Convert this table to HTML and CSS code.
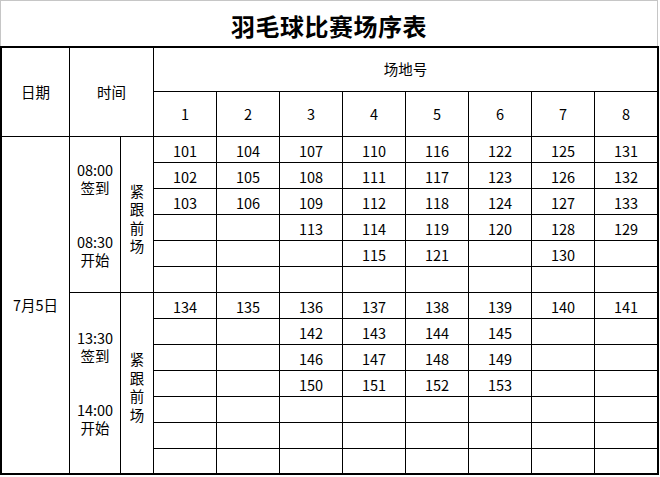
FILE: index.html
```html
<!DOCTYPE html>
<html lang="zh">
<head>
<meta charset="utf-8">
<title>羽毛球比赛场序表</title>
<link rel="stylesheet" href="styles.css">
</head>
<body>
<div class="page">
  <div class="title">羽毛球比赛场序表</div>
  <div class="sheet">
    <div class="cell h-date">日期</div>
    <div class="cell h-time">时间</div>
    <div class="cell h-court">场地号</div>
    <div class="cell">1</div>
    <div class="cell">2</div>
    <div class="cell">3</div>
    <div class="cell">4</div>
    <div class="cell">5</div>
    <div class="cell">6</div>
    <div class="cell">7</div>
    <div class="cell">8</div>

    <div class="cell date">7月5日</div>

    <div class="cell time b1"><span>08:00</span><span>签到</span><span>&nbsp;</span><span>&nbsp;</span><span>08:30</span><span>开始</span></div>
    <div class="cell follow b1"><span>紧</span><span>跟</span><span>前</span><span>场</span></div>

    <div class="cell d">101</div><div class="cell d">104</div><div class="cell d">107</div><div class="cell d">110</div><div class="cell d">116</div><div class="cell d">122</div><div class="cell d">125</div><div class="cell d">131</div>
    <div class="cell d">102</div><div class="cell d">105</div><div class="cell d">108</div><div class="cell d">111</div><div class="cell d">117</div><div class="cell d">123</div><div class="cell d">126</div><div class="cell d">132</div>
    <div class="cell d">103</div><div class="cell d">106</div><div class="cell d">109</div><div class="cell d">112</div><div class="cell d">118</div><div class="cell d">124</div><div class="cell d">127</div><div class="cell d">133</div>
    <div class="cell d"></div><div class="cell d"></div><div class="cell d">113</div><div class="cell d">114</div><div class="cell d">119</div><div class="cell d">120</div><div class="cell d">128</div><div class="cell d">129</div>
    <div class="cell d"></div><div class="cell d"></div><div class="cell d"></div><div class="cell d">115</div><div class="cell d">121</div><div class="cell d"></div><div class="cell d">130</div><div class="cell d"></div>
    <div class="cell d"></div><div class="cell d"></div><div class="cell d"></div><div class="cell d"></div><div class="cell d"></div><div class="cell d"></div><div class="cell d"></div><div class="cell d"></div>

    <div class="cell time b2"><span>13:30</span><span>签到</span><span>&nbsp;</span><span>&nbsp;</span><span>14:00</span><span>开始</span></div>
    <div class="cell follow b2"><span>紧</span><span>跟</span><span>前</span><span>场</span></div>

    <div class="cell d">134</div><div class="cell d">135</div><div class="cell d">136</div><div class="cell d">137</div><div class="cell d">138</div><div class="cell d">139</div><div class="cell d">140</div><div class="cell d">141</div>
    <div class="cell d"></div><div class="cell d"></div><div class="cell d">142</div><div class="cell d">143</div><div class="cell d">144</div><div class="cell d">145</div><div class="cell d"></div><div class="cell d"></div>
    <div class="cell d"></div><div class="cell d"></div><div class="cell d">146</div><div class="cell d">147</div><div class="cell d">148</div><div class="cell d">149</div><div class="cell d"></div><div class="cell d"></div>
    <div class="cell d"></div><div class="cell d"></div><div class="cell d">150</div><div class="cell d">151</div><div class="cell d">152</div><div class="cell d">153</div><div class="cell d"></div><div class="cell d"></div>
    <div class="cell d"></div><div class="cell d"></div><div class="cell d"></div><div class="cell d"></div><div class="cell d"></div><div class="cell d"></div><div class="cell d"></div><div class="cell d"></div>
    <div class="cell d"></div><div class="cell d"></div><div class="cell d"></div><div class="cell d"></div><div class="cell d"></div><div class="cell d"></div><div class="cell d"></div><div class="cell d"></div>
    <div class="cell d"></div><div class="cell d"></div><div class="cell d"></div><div class="cell d"></div><div class="cell d"></div><div class="cell d"></div><div class="cell d"></div><div class="cell d"></div>
  </div>
</div>
</body>
</html>
```
FILE: styles.css
```css
html, body {
  margin: 0;
  padding: 0;
  background: #ffffff;
}

body {
  font-family: "Noto Sans CJK SC", "Noto Sans", sans-serif;
  font-size: 14.5px;
  color: #000000;
}

.page {
  width: 660px;
}

.title {
  box-sizing: border-box;
  width: 658px;
  height: 46px;
  border: 1px solid #c6c6c6;
  border-bottom: none;
  display: flex;
  align-items: center;
  justify-content: center;
  padding-top: 4px;
  font-size: 24px;
  font-weight: 700;
  letter-spacing: 0.5px;
  line-height: 1;
}

.sheet {
  width: 655px;
  display: grid;
  grid-template-columns: 67px 50px 32px repeat(8, 62px);
  grid-template-rows: 43px 44px repeat(12, 25px) 24px;
  gap: 1px;
  background: #000000;
  border: 2px solid #000000;
}

.cell {
  background: #ffffff;
  display: flex;
  align-items: center;
  justify-content: center;
  line-height: 1;
  white-space: nowrap;
}

.h-date {
  grid-column: 1;
  grid-row: 1 / span 2;
}

.h-time {
  grid-column: 2 / span 2;
  grid-row: 1 / span 2;
}

.h-court {
  grid-column: 4 / span 8;
  grid-row: 1;
}

.date {
  grid-column: 1;
  grid-row: 3 / span 13;
}

.time {
  grid-column: 2;
  flex-direction: column;
  line-height: 18px;
}

.follow {
  grid-column: 3;
  flex-direction: column;
  line-height: 18.5px;
  padding-top: 8px;
}

.b1 {
  grid-row: 3 / span 6;
}

.b2 {
  grid-row: 9 / span 7;
}

.d {
  padding-top: 3px;
  box-sizing: border-box;
}
```
